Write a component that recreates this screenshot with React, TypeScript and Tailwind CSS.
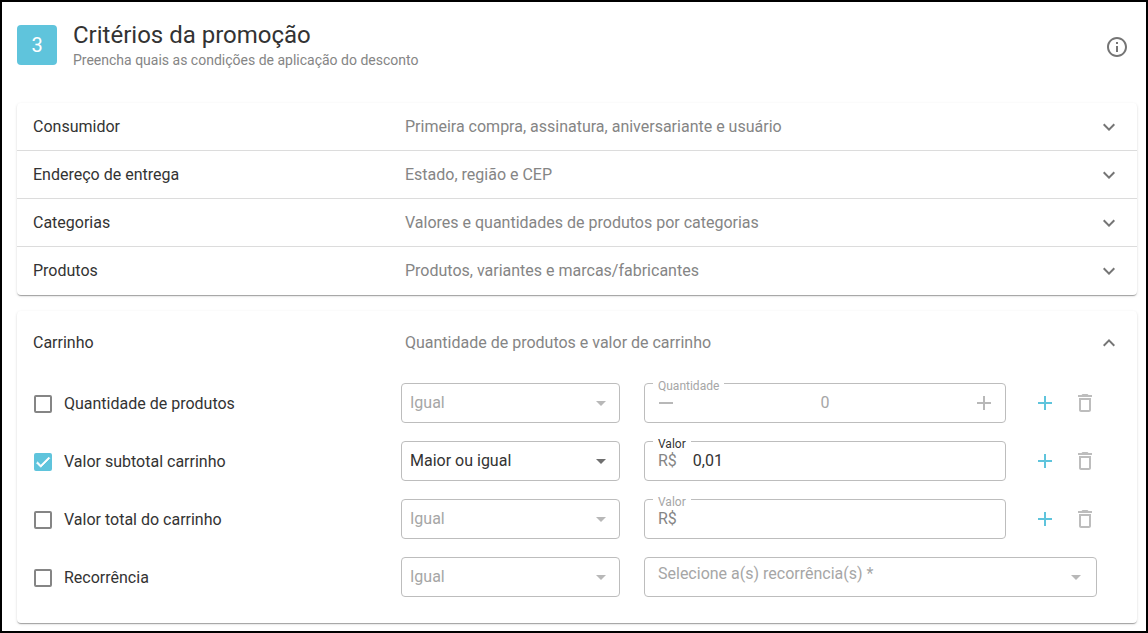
import { useState } from "react";
import type { ReactNode } from "react";
import clsx from "clsx";

type Section = { title: string; description: string };

const sections: Section[] = [
  { title: "Consumidor", description: "Primeira compra, assinatura, aniversariante e usuário" },
  { title: "Endereço de entrega", description: "Estado, região e CEP" },
  { title: "Categorias", description: "Valores e quantidades de produtos por categorias" },
  { title: "Produtos", description: "Produtos, variantes e marcas/fabricantes" },
];

const operators = ["Igual", "Maior ou igual", "Menor ou igual"];

const cardClass =
  "rounded bg-white shadow-[0_2px_1px_-1px_rgba(0,0,0,0.2),0_1px_1px_0_rgba(0,0,0,0.14),0_1px_3px_0_rgba(0,0,0,0.12)]";

const paths = {
  info: "M11 7h2v2h-2V7zm0 4h2v6h-2v-6zm1-9C6.48 2 2 6.48 2 12s4.48 10 10 10 10-4.48 10-10S17.52 2 12 2zm0 18c-4.41 0-8-3.59-8-8s3.59-8 8-8 8 3.59 8 8-3.59 8-8 8z",
  expandMore: "M16.59 8.59L12 13.17 7.41 8.59 6 10l6 6 6-6z",
  expandLess: "M12 8l-6 6 1.41 1.41L12 10.83l4.59 4.58L18 14z",
  add: "M19 13h-6v6h-2v-6H5v-2h6V5h2v6h6v2z",
  remove: "M19 13H5v-2h14v2z",
  trash: "M6 19c0 1.1.9 2 2 2h8c1.1 0 2-.9 2-2V7H6v12zM8 9h8v10H8V9zm7.5-5l-1-1h-5l-1 1H5v2h14V4z",
  dropDown: "M7 10l5 5 5-5z",
  check: "M9 16.17L4.83 12l-1.42 1.41L9 19 21 7l-1.41-1.41z",
};

function Icon({ name, className }: { name: keyof typeof paths; className?: string }) {
  return (
    <svg viewBox="0 0 24 24" fill="currentColor" aria-hidden="true" className={clsx("shrink-0", className ?? "size-6")}>
      <path d={paths[name]} />
    </svg>
  );
}

function SectionHeader({ title, description, open = false }: Section & { open?: boolean }) {
  return (
    <button
      type="button"
      aria-expanded={open}
      className={clsx(
        "grid w-full cursor-pointer grid-cols-[372fr_692fr_24px] items-center px-4 text-left",
        open ? "h-16" : "h-12"
      )}
    >
      <span>{title}</span>
      <span className="text-[#858585]">{description}</span>
      <Icon name={open ? "expandLess" : "expandMore"} className="size-6 text-[#757575]" />
    </button>
  );
}

function Checkbox({ id, label, defaultChecked }: { id: string; label: string; defaultChecked?: boolean }) {
  return (
    <label htmlFor={id} className="flex cursor-pointer items-center gap-3 pt-0.5 pl-px">
      <span className="relative flex size-[18px]">
        <input
          id={id}
          type="checkbox"
          defaultChecked={defaultChecked}
          className="peer size-[18px] appearance-none rounded-xs border-2 border-[#858585] checked:border-[#5fc4dc] checked:bg-[#5fc4dc]"
        />
        <Icon
          name="check"
          className="pointer-events-none absolute inset-0 hidden size-[18px] stroke-current text-white peer-checked:block"
        />
      </span>
      {label}
    </label>
  );
}

function Select({ label, value, options, disabled, wide }: {
  label: string;
  value: string;
  options: string[];
  disabled?: boolean;
  wide?: boolean;
}) {
  return (
    <div className="relative">
      <select
        aria-label={label}
        defaultValue={value}
        disabled={disabled}
        className={clsx(
          "h-10 w-full appearance-none rounded border border-[#bdbdbd] bg-white pr-8 text-[#333] disabled:text-[#a6a6a6] disabled:opacity-100",
          wide ? "pb-1.5 pl-[13px]" : "pl-2"
        )}
      >
        {options.map((option) => (
          <option key={option}>{option}</option>
        ))}
      </select>
      <Icon
        name="dropDown"
        className={clsx(
          "pointer-events-none absolute top-2 size-6",
          wide ? "right-[9px]" : "right-[7px]",
          disabled ? "text-[#b8b8b8]" : "text-[#6f6f6f]"
        )}
      />
    </div>
  );
}

function OutlinedField({ id, label, active, children }: {
  id: string;
  label: string;
  active?: boolean;
  children: ReactNode;
}) {
  return (
    <div className="relative flex h-10 min-w-0 flex-1 items-center rounded border border-[#bdbdbd]">
      <label
        htmlFor={id}
        className={clsx(
          "absolute -top-1.5 left-2 bg-white px-[5px] text-xs leading-4",
          active ? "text-[#333]" : "text-[#a6a6a6]"
        )}
      >
        {label}
      </label>
      {children}
    </div>
  );
}

function RowActions() {
  return (
    <div className="ml-[27px] flex gap-4">
      <button type="button" aria-label="Adicionar" className="cursor-pointer text-[#5fc4dc]">
        <Icon name="add" />
      </button>
      <button type="button" aria-label="Remover" disabled className="text-[#bdbdbd]">
        <Icon name="trash" />
      </button>
    </div>
  );
}

function QuantityField() {
  const [quantity, setQuantity] = useState(0);

  return (
    <OutlinedField id="quantidade" label="Quantidade">
      <button
        type="button"
        aria-label="Diminuir"
        onClick={() => setQuantity(Math.max(0, quantity - 1))}
        className="ml-[9px] text-[#b8b8b8]"
      >
        <Icon name="remove" />
      </button>
      <input
        id="quantidade"
        inputMode="numeric"
        readOnly
        value={quantity}
        className="w-full min-w-0 text-center text-[#a6a6a6] outline-none"
      />
      <button
        type="button"
        aria-label="Aumentar"
        onClick={() => setQuantity(quantity + 1)}
        className="mr-[9px] text-[#b8b8b8]"
      >
        <Icon name="add" />
      </button>
    </OutlinedField>
  );
}

function MoneyField({ id, value, active }: { id: string; value?: string; active?: boolean }) {
  return (
    <OutlinedField id={id} label="Valor" active={active}>
      <span className="pl-[13px] text-[#858585]">R$</span>
      <input id={id} defaultValue={value} disabled={!active} className="ml-4 w-full min-w-0 text-[#333] outline-none" />
    </OutlinedField>
  );
}

function CriteriaRow({ id, label, operator = "Igual", checked = false, children }: {
  id: string;
  label: string;
  operator?: string;
  checked?: boolean;
  children: ReactNode;
}) {
  return (
    <div className="grid grid-cols-[344fr_219fr_453fr] items-center gap-x-6">
      <Checkbox id={id} label={label} defaultChecked={checked} />
      <Select label={`Operador de ${label}`} value={operator} options={operators} disabled={!checked} />
      {children}
    </div>
  );
}

export default function App() {
  return (
    <main className="min-h-screen border-2 border-black bg-white pr-[9px] pb-2 pl-[15px] font-['Roboto',sans-serif] text-base text-[#333]">
      <header className="mb-8 flex items-center gap-4 pt-[17px]">
        <div className="flex size-10 items-center justify-center rounded bg-[#5fc4dc] text-xl text-white">3</div>
        <div className="flex-1 pb-0.5">
          <h1 className="text-2xl leading-8">Critérios da promoção</h1>
          <p className="text-sm leading-[18px] text-[#858585]">Preencha quais as condições de aplicação do desconto</p>
        </div>
        <button type="button" aria-label="Informações" className="mt-1 mr-2 cursor-pointer text-[#757575]">
          <Icon name="info" />
        </button>
      </header>

      <section className={clsx(cardClass, "mb-4 divide-y divide-[#dcdcdc]")}>
        {sections.map((section) => (
          <SectionHeader key={section.title} {...section} />
        ))}
      </section>

      {/* Carrinho (expanded) */}
      <section className={cardClass}>
        <SectionHeader title="Carrinho" description="Quantidade de produtos e valor de carrinho" open />

        <div className="flex flex-col gap-[18px] pt-2 pr-10 pb-[26px] pl-4">
          <CriteriaRow id="quantidade-produtos" label="Quantidade de produtos">
            <div className="flex items-center">
              <QuantityField />
              <RowActions />
            </div>
          </CriteriaRow>

          <CriteriaRow id="subtotal" label="Valor subtotal carrinho" operator="Maior ou igual" checked>
            <div className="flex items-center">
              <MoneyField id="valor-subtotal" value="0,01" active />
              <RowActions />
            </div>
          </CriteriaRow>

          <CriteriaRow id="total" label="Valor total do carrinho">
            <div className="flex items-center">
              <MoneyField id="valor-total" />
              <RowActions />
            </div>
          </CriteriaRow>

          <CriteriaRow id="recorrencia" label="Recorrência">
            <Select
              label="Recorrência"
              value="Selecione a(s) recorrência(s) *"
              options={["Selecione a(s) recorrência(s) *"]}
              disabled
              wide
            />
          </CriteriaRow>
        </div>
      </section>
    </main>
  );
}
